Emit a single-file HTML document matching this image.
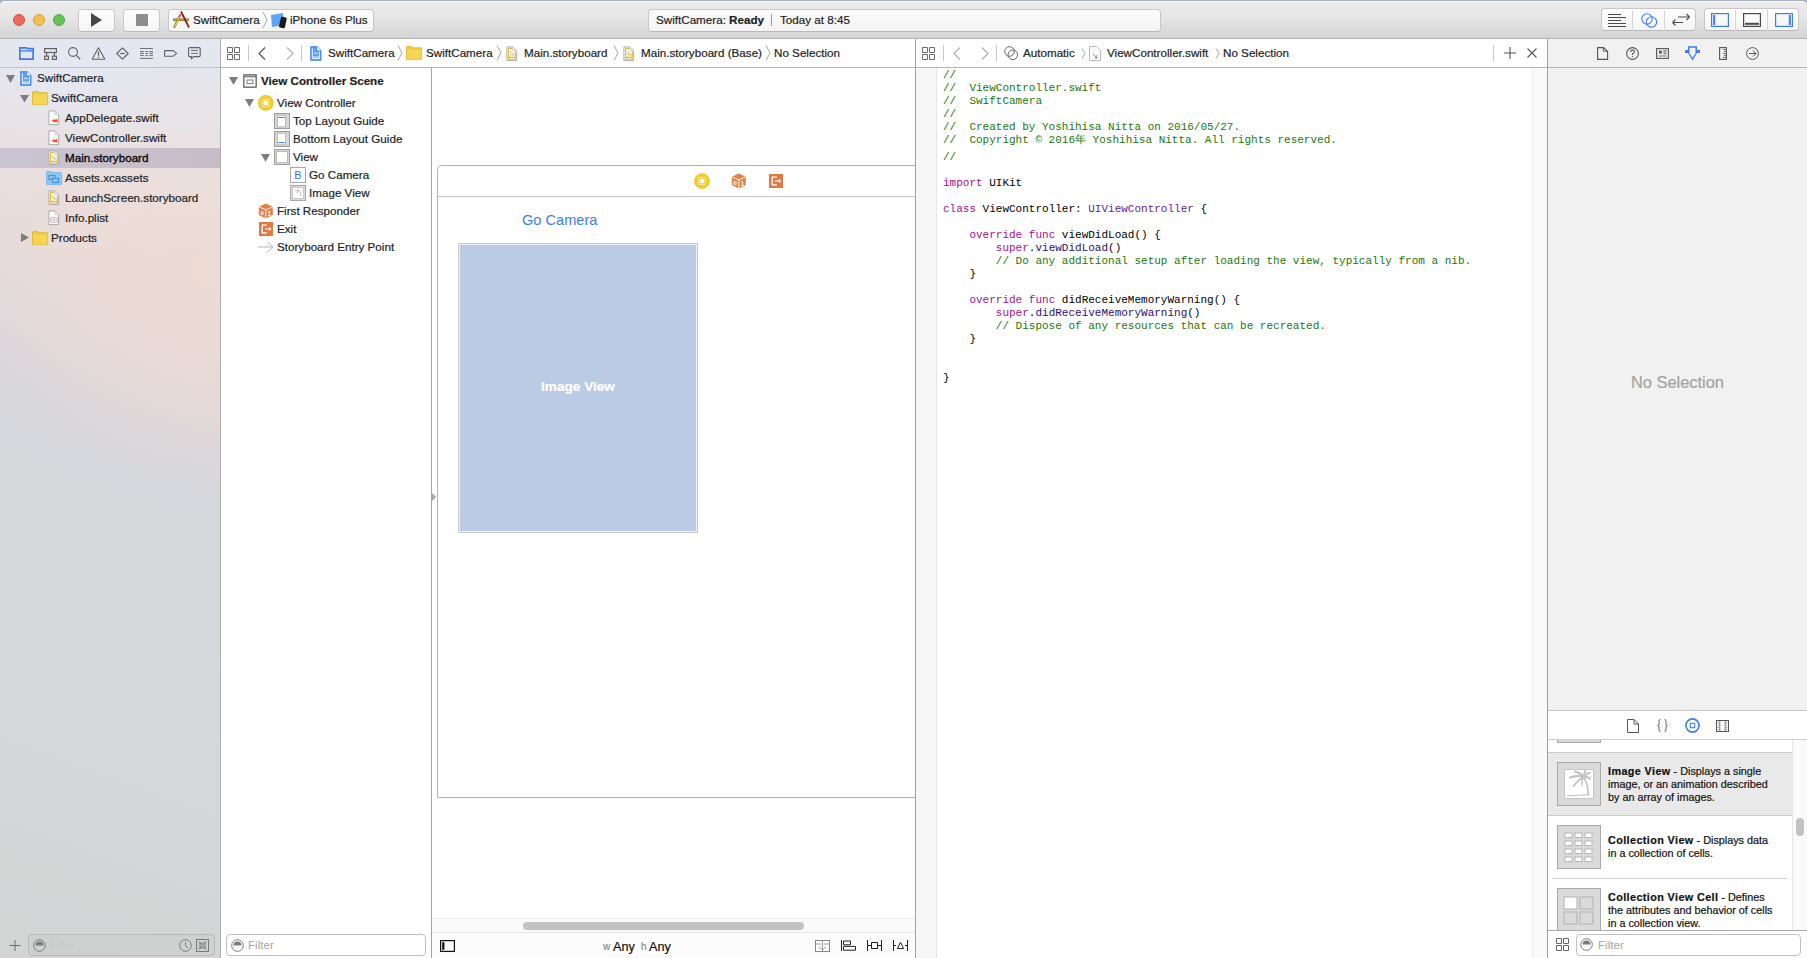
<!DOCTYPE html>
<html><head><meta charset="utf-8">
<style>
*{margin:0;padding:0;box-sizing:border-box}
html,body{width:1807px;height:958px;overflow:hidden;background:#fff}
body{font-family:"Liberation Sans",sans-serif;font-size:11.65px;color:#1e1e1e;position:relative}
.a{position:absolute}
svg{position:absolute;overflow:visible}
.t{position:absolute;white-space:nowrap;line-height:14px;-webkit-text-stroke:0.2px currentColor}
#tb{left:0;top:1px;width:1807px;height:38px;border-radius:5px 5px 0 0;background:linear-gradient(#ececec,#e7e7e7 40%,#d4d4d4);border-bottom:1px solid #b3b3b3;box-shadow:inset 0 1px 0 #fafafa}
#topline{left:0;top:0;width:1807px;height:8px;background:#a9b2bf}
.btn{position:absolute;background:linear-gradient(#fefefe,#f4f4f4);border:1px solid #c8c8c8;border-bottom-color:#b9b9b9;border-radius:4px;top:9px;height:23px}
.light{position:absolute;top:14px;width:12px;height:12px;border-radius:50%}
#nav{left:0;top:39px;width:220px;height:919px;background:radial-gradient(ellipse 240px 220px at 215px 230px,rgba(240,218,208,0.7),rgba(240,218,208,0.4) 55%,rgba(240,218,208,0) 100%),linear-gradient(200deg,#e4e8f0 0px,#e5e7ef 100px,#e7e1e3 160px,#e7dddc 240px,#e1d9dc 320px,#d9d7dc 390px,#d6d7dc 450px,#d5d7d9 651px,#d3d4d4 945px)}
.hb{position:absolute;height:1px;background:#bcbcbc}
.vb{position:absolute;width:1px;background:#b0b0b0}
.code{position:absolute;left:943px;font-family:"Liberation Mono",monospace;font-size:11px;white-space:pre;line-height:13px;color:#000}
.c{color:#1a780c}.k{color:#aa0d91}.cl{color:#5c2699}.m{color:#2e0d6e}
.field{position:absolute;border:1px solid #b8b8b8;border-radius:4px;height:22px;top:934px}
.lt b{letter-spacing:0.4px}
.ph{position:absolute;color:#a6a6a6;white-space:nowrap;line-height:14px}
</style></head><body>
<!-- ============ TOOLBAR ============ -->
<div id="topline" class="a"></div>
<div id="tb" class="a"></div>
<div class="light" style="left:13px;background:#ed6a5e;border:0.5px solid #d5503f"></div>
<div class="light" style="left:33px;background:#f5bf4f;border:0.5px solid #d6a13c"></div>
<div class="light" style="left:53px;background:#62c554;border:0.5px solid #52a843"></div>
<div class="btn" style="left:78px;width:37px"></div>
<svg style="left:91px;top:13px" width="12" height="14"><path d="M0 0 L11 7 L0 14Z" fill="#474747"/></svg>
<div class="btn" style="left:123px;width:37px"></div>
<div class="a" style="left:136px;top:14px;width:12px;height:12px;background:#8d8d8d"></div>
<div class="btn" style="left:168px;width:206px"></div>
<!-- xcode icon -->
<svg style="left:172px;top:11px" width="18" height="18"><path d="M1 8.8H17" stroke="#8a6a3a" stroke-width="2.6"/><path d="M1.3 8.8H16.7" stroke="#c9a66a" stroke-width="1.2"/><path d="M9 0.5L17 16.5" stroke="#8e1c12" stroke-width="1.7"/><path d="M2 16.8L7.6 5.2" stroke="#6b5a20" stroke-width="2.1"/><path d="M2.2 16.4L7.6 5.4" stroke="#f3dd3a" stroke-width="1.2"/><path d="M7.4 5.6L8.6 3.2" stroke="#e05050" stroke-width="2"/></svg>
<div class="t" style="left:193px;top:13px">SwiftCamera</div>
<svg style="left:262px;top:12px" width="6" height="16"><path d="M1 0 L5 8 L1 16" stroke="#a8a8a8" fill="none"/></svg>
<svg style="left:270px;top:13px" width="18" height="15">
<path d="M1 2 L13 0 L14 12 L2 14Z" fill="#5ea5f5"/>
<rect x="10" y="4" width="6" height="11" rx="1.2" fill="#1a1a1a" transform="rotate(12 13 9)"/>
</svg>
<div class="t" style="left:290px;top:13px">iPhone 6s Plus</div>
<!-- activity view -->
<div class="btn" style="left:648px;width:513px;background:linear-gradient(#fbfbfb,#f4f4f4)"></div>
<div class="t" style="left:656px;top:13px">SwiftCamera: <b>Ready</b></div>
<div class="a" style="left:771px;top:14px;width:1px;height:12px;background:#9a9a9a"></div>
<div class="t" style="left:780px;top:13px">Today at 8:45</div>
<!-- right segmented -->
<div class="btn" style="left:1601px;width:95px;top:8px"></div>
<div class="a" style="left:1632px;top:10px;width:1px;height:21px;background:#d6d6d6"></div>
<div class="a" style="left:1664px;top:10px;width:1px;height:21px;background:#d6d6d6"></div>
<svg style="left:1608px;top:14px" width="18" height="13"><path d="M0 0.5H13M0 3.5H18M0 6.5H13M0 9.5H18M0 12.5H18" stroke="#4a4a4a" stroke-width="1"/></svg>
<svg style="left:1641px;top:13px" width="17" height="14"><circle cx="6" cy="6" r="5.2" stroke="#3f7cf0" fill="none" stroke-width="1.1"/><circle cx="10.5" cy="9" r="5.2" stroke="#3f7cf0" fill="none" stroke-width="1.1"/></svg>
<svg style="left:1672px;top:14px" width="18" height="12"><path d="M0.5 8.5H11M0.5 8.5L3.5 5.5M0.5 8.5L3.5 11.5M6 3H17.5M17.5 3L14.5 0M17.5 3L14.5 6" stroke="#4a4a4a" fill="none" stroke-width="1.1"/></svg>
<div class="btn" style="left:1704px;width:95px;top:8px"></div>
<div class="a" style="left:1735px;top:10px;width:1px;height:21px;background:#d6d6d6"></div>
<div class="a" style="left:1767px;top:10px;width:1px;height:21px;background:#d6d6d6"></div>
<svg style="left:1711px;top:13px" width="18" height="14"><rect x="0.6" y="0.6" width="16.8" height="12.8" stroke="#3f7cf0" fill="none" stroke-width="1.2"/><rect x="2.2" y="2" width="2" height="10" fill="#3f7cf0"/></svg>
<svg style="left:1743px;top:13px" width="18" height="14"><rect x="0.6" y="0.6" width="16.8" height="12.8" stroke="#4a4a4a" fill="none" stroke-width="1.2"/><rect x="2" y="9.8" width="14" height="2" fill="#4a4a4a"/></svg>
<svg style="left:1775px;top:13px" width="18" height="14"><rect x="0.6" y="0.6" width="16.8" height="12.8" stroke="#3f7cf0" fill="none" stroke-width="1.2"/><rect x="13.8" y="2" width="2" height="10" fill="#3f7cf0"/></svg>

<!-- ============ NAVIGATOR ============ -->
<div id="nav" class="a"></div>
<div class="hb" style="left:0;top:67px;width:220px;background:#c3c3c6"></div>
<svg style="left:19px;top:47px" width="15" height="13"><path d="M0.85 0.85H7.6L8.4 1.7H14.15V12.15H0.85Z" fill="none" stroke="#3b7cf3" stroke-width="1.7"/><path d="M1.7 3.9H13.3" stroke="#3b7cf3" stroke-width="1.3"/></svg>
<svg style="left:44px;top:48px" width="13" height="12"><g fill="none" stroke="#626262" stroke-width="1.2"><rect x="0.6" y="0.6" width="11.8" height="3.9"/><path d="M2.6 4.5V8M10.4 4.5V8"/><rect x="0.6" y="8.2" width="3.9" height="3.2"/><rect x="8.5" y="8.2" width="3.9" height="3.2"/></g></svg>
<svg style="left:68px;top:47px" width="13" height="13"><circle cx="5" cy="5" r="4.4" fill="none" stroke="#626262" stroke-width="1.1"/><path d="M8.1 8.1L12.2 12.2" stroke="#626262" stroke-width="1.3"/></svg>
<svg style="left:92px;top:47px" width="14" height="13"><path d="M6.5 0.8L12.6 11.8Q12.8 12.3 12.2 12.3H0.8Q0.2 12.3 0.4 11.8Z" fill="none" stroke="#626262" stroke-width="1.1" stroke-linejoin="round"/><path d="M6.5 4.2V8.8M6.5 9.8V11" stroke="#626262" stroke-width="1.2"/></svg>
<svg style="left:116px;top:47px" width="13" height="13"><path d="M6.5 0.8L12.2 6.5L6.5 12.2L0.8 6.5Z" fill="none" stroke="#626262" stroke-width="1.1" stroke-linejoin="round"/><path d="M4.2 6.5H8.8" stroke="#626262" stroke-width="1.1"/></svg>
<svg style="left:140px;top:48px" width="13" height="11"><path d="M0 0.5H13M0 3.5H3.8M5.4 3.5H7.9M9.3 3.5H13M0 5.4H3.8M5.4 5.4H7.9M9.3 5.4H13M0 7.4H3.8M5.4 7.4H7.9M9.3 7.4H13M0 10.4H13" stroke="#626262" stroke-width="0.9"/></svg>
<svg style="left:164px;top:50px" width="14" height="7"><path d="M0.6 0.6H9.3L12.6 3.4L9.3 6.2H0.6Z" fill="none" stroke="#626262" stroke-width="1.1" stroke-linejoin="round"/></svg>
<svg style="left:188px;top:47px" width="13" height="12"><path d="M1.6 0.6H11.2Q12.2 0.6 12.2 1.6V8.6Q12.2 9.6 11.2 9.6H5.6L3.5 11.6V9.6H1.6Q0.6 9.6 0.6 8.6V1.6Q0.6 0.6 1.6 0.6Z" fill="none" stroke="#626262" stroke-width="1.1"/><path d="M3 3.4H10M3 6.4H10" stroke="#626262" stroke-width="0.9"/></svg>

<!-- tree -->
<div class="a" style="left:0;top:148px;width:220px;height:20px;background:linear-gradient(90deg,#c8c5d1,#c6bcc6)"></div>
<svg style="left:6px;top:75px" width="9" height="8"><path d="M0 0H9L4.5 8Z" fill="#7d7d7d"/></svg>
<svg style="left:20px;top:71px" width="12" height="15"><path d="M0.7 0.7H7.4L11 4.3V14.3H0.7Z" fill="#5b9cf6" stroke="#3f7fe4" stroke-width="0.9"/><path d="M7.4 0.7V4.3H11Z" fill="#fff"/><path d="M2.3 2.2V12.6H9.4V5.5M2.3 11H9.4" fill="none" stroke="#fff" stroke-width="0.9"/><path d="M4.2 8.2Q5.85 5.8 7.5 8.2" fill="none" stroke="#d8e8ff" stroke-width="1.2"/></svg>
<div class="t" style="left:37px;top:71px">SwiftCamera</div>
<svg style="left:20px;top:95px" width="9" height="8"><path d="M0 0H9L4.5 7.5Z" fill="#7d7d7d"/></svg>
<svg style="left:32px;top:91px" width="16" height="14"><path d="M0.5 1Q0.5 0.4 1.1 0.4H5.6Q6.2 0.4 6.5 1L6.9 1.8H15Q15.6 1.8 15.6 2.4V13Q15.6 13.6 15 13.6H1.1Q0.5 13.6 0.5 13Z" fill="#eccb3c" stroke="#d9b526" stroke-width="0.8"/><path d="M0.9 3.2H15.2V12.9Q15.2 13.2 14.9 13.2H1.2Q0.9 13.2 0.9 12.9Z" fill="#f4d654"/></svg>
<div class="t" style="left:51px;top:91px">SwiftCamera</div>
<!-- files -->
<svg style="left:48px;top:110px" width="12" height="16"><path d="M0.9 0.9H6.8L10.6 4.7V14.6H0.9Z" fill="#fff" stroke="#a4a4a4" stroke-width="0.9"/><path d="M6.8 0.9V4.7H10.6Z" fill="#ececec" stroke="#c4c4c4" stroke-width="0.7"/><path d="M2.8 10Q5.6 12.9 8.6 12.2Q9.4 12.2 9.7 12.7Q10 10.3 8.3 7.6Q8.8 9.2 8.1 10.1Q6 9 4.2 7.2Q5.5 9 6.4 10Q4.8 10.6 2.8 10Z" fill="#e84e2c"/></svg>
<div class="t" style="left:65px;top:111px">AppDelegate.swift</div>
<svg style="left:48px;top:130px" width="12" height="16"><path d="M0.9 0.9H6.8L10.6 4.7V14.6H0.9Z" fill="#fff" stroke="#a4a4a4" stroke-width="0.9"/><path d="M6.8 0.9V4.7H10.6Z" fill="#ececec" stroke="#c4c4c4" stroke-width="0.7"/><path d="M2.8 10Q5.6 12.9 8.6 12.2Q9.4 12.2 9.7 12.7Q10 10.3 8.3 7.6Q8.8 9.2 8.1 10.1Q6 9 4.2 7.2Q5.5 9 6.4 10Q4.8 10.6 2.8 10Z" fill="#e84e2c"/></svg>
<div class="t" style="left:65px;top:131px">ViewController.swift</div>
<svg style="left:48px;top:150px" width="12" height="16"><path d="M0.9 0.9H6.8L10.6 4.7V14.6H0.9Z" fill="#fff" stroke="#a4a4a4" stroke-width="0.9"/><path d="M2.6 2.4H6.4M2.6 2.4V13.2H9.2V5.5M2.6 11.4H9.2" fill="none" stroke="#e0b92c" stroke-width="1.1"/><path d="M6.8 0.9V4.7H10.6Z" fill="#ececec" stroke="#c4c4c4" stroke-width="0.7"/><path d="M4.2 6.2Q5.2 5.4 6.2 6.8Q7.4 8.4 8 9.6M4.6 7.4Q5.8 9.6 7.2 9.2" fill="none" stroke="#e0b92c" stroke-width="0.9"/></svg>
<div class="t" style="left:65px;top:151px;color:#0a0a0a;-webkit-text-stroke:0.35px #0a0a0a">Main.storyboard</div>
<svg style="left:46px;top:171px" width="16" height="14"><path d="M0.5 1Q0.5 0.4 1.1 0.4H5.6L6.6 1.6H15Q15.6 1.6 15.6 2.2V13Q15.6 13.6 15 13.6H1.1Q0.5 13.6 0.5 13Z" fill="#8ec6f3" stroke="#74b3ec" stroke-width="0.8"/><rect x="3" y="4.6" width="6" height="4" fill="none" stroke="#3f8ee0" stroke-width="1"/><rect x="6.5" y="7.4" width="6" height="4" fill="#8ec6f3" stroke="#3f8ee0" stroke-width="1"/></svg>
<div class="t" style="left:65px;top:171px">Assets.xcassets</div>
<svg style="left:48px;top:190px" width="12" height="16"><path d="M0.9 0.9H6.8L10.6 4.7V14.6H0.9Z" fill="#fff" stroke="#a4a4a4" stroke-width="0.9"/><path d="M2.6 2.4H6.4M2.6 2.4V13.2H9.2V5.5M2.6 11.4H9.2" fill="none" stroke="#e0b92c" stroke-width="1.1"/><path d="M6.8 0.9V4.7H10.6Z" fill="#ececec" stroke="#c4c4c4" stroke-width="0.7"/><path d="M4.2 6.2Q5.2 5.4 6.2 6.8Q7.4 8.4 8 9.6M4.6 7.4Q5.8 9.6 7.2 9.2" fill="none" stroke="#e0b92c" stroke-width="0.9"/></svg>
<div class="t" style="left:65px;top:191px">LaunchScreen.storyboard</div>
<svg style="left:48px;top:210px" width="12" height="16"><path d="M0.9 0.9H6.8L10.6 4.7V14.6H0.9Z" fill="#fff" stroke="#a4a4a4" stroke-width="0.9"/><path d="M6.8 0.9V4.7H10.6Z" fill="#ececec" stroke="#c4c4c4" stroke-width="0.7"/><path d="M2.6 7.3H9.3V12.3H2.6ZM2.6 9.8H9.3M5.9 7.3V12.3" fill="none" stroke="#b4b4b4" stroke-width="0.8"/></svg>
<div class="t" style="left:65px;top:211px">Info.plist</div>
<svg style="left:21px;top:233px" width="8" height="9"><path d="M0 0V9L8 4.5Z" fill="#7d7d7d"/></svg>
<svg style="left:32px;top:231px" width="16" height="14"><path d="M0.5 1Q0.5 0.4 1.1 0.4H5.6Q6.2 0.4 6.5 1L6.9 1.8H15Q15.6 1.8 15.6 2.4V13Q15.6 13.6 15 13.6H1.1Q0.5 13.6 0.5 13Z" fill="#eccb3c" stroke="#d9b526" stroke-width="0.8"/><path d="M0.9 3.2H15.2V12.9Q15.2 13.2 14.9 13.2H1.2Q0.9 13.2 0.9 12.9Z" fill="#f4d654"/></svg>
<div class="t" style="left:51px;top:231px">Products</div>
<!-- nav bottom -->
<svg style="left:9px;top:940px" width="12" height="12"><path d="M6 0V11M0.5 5.5H11.5" stroke="#6d6d6d" stroke-width="1"/></svg>
<div class="field" style="left:28px;width:187px;background:rgba(200,200,200,0.35);border-color:#b9b9b9"></div>
<svg style="left:33px;top:939px" width="13" height="13"><circle cx="6.5" cy="6.5" r="5.8" fill="none" stroke="#7a7a7a" stroke-width="1"/><path d="M2.5 6.5A4 4 0 0 1 10.5 6.5Z" fill="#7a7a7a"/></svg>
<div class="ph" style="left:50px;top:938px;color:#c9c9c9">Filter</div>
<svg style="left:179px;top:939px" width="13" height="13"><circle cx="6.5" cy="6.5" r="5.8" fill="none" stroke="#7a7a7a" stroke-width="1"/><path d="M6.5 3V6.5L9 9" stroke="#7a7a7a" fill="none"/></svg>
<svg style="left:196px;top:939px" width="13" height="13"><rect x="0.5" y="0.5" width="12" height="12" fill="none" stroke="#7a7a7a"/><path d="M2.5 2.5L10.5 10.5M10.5 2.5L2.5 10.5" stroke="#7a7a7a"/><rect x="4" y="4" width="5" height="5" fill="none" stroke="#7a7a7a"/></svg>
<div class="vb" style="left:220px;top:39px;height:919px;background:#adadad"></div>

<!-- ============ BREADCRUMB (storyboard editor) ============ -->
<div class="hb" style="left:221px;top:67px;width:1326px;background:#b5b5b5"></div>
<svg style="left:227px;top:47px" width="14" height="14"><path d="M0.5 0.5H5.5V5.5H0.5ZM7.5 0.5H12.5V5.5H7.5ZM0.5 7.5H5.5V12.5H0.5ZM7.5 7.5H12.5V12.5H7.5Z" fill="none" stroke="#6b6b6b"/></svg>
<div class="a" style="left:248px;top:45px;width:1px;height:16px;background:#c8c8c8"></div>
<svg style="left:258px;top:47px" width="8" height="13"><path d="M7 0.5L1 6.5L7 12.5" stroke="#555" fill="none" stroke-width="1.2"/></svg>
<svg style="left:286px;top:47px" width="8" height="13"><path d="M1 0.5L7 6.5L1 12.5" stroke="#b0b0b0" fill="none" stroke-width="1.2"/></svg>
<div class="a" style="left:301px;top:45px;width:1px;height:16px;background:#c8c8c8"></div>
<svg style="left:310px;top:46px" width="12" height="15"><path d="M0.7 0.7H7.4L11 4.3V14.3H0.7Z" fill="#5b9cf6" stroke="#3f7fe4" stroke-width="0.9"/><path d="M7.4 0.7V4.3H11Z" fill="#fff"/><path d="M2.3 2.2V12.6H9.4V5.5M2.3 11H9.4" fill="none" stroke="#fff" stroke-width="0.9"/><path d="M4.2 8.2Q5.85 5.8 7.5 8.2" fill="none" stroke="#d8e8ff" stroke-width="1.2"/></svg>
<div class="t" style="left:328px;top:46px">SwiftCamera</div>
<svg style="left:397px;top:45px" width="6" height="16"><path d="M1 0.5L5 8L1 15.5" stroke="#a8a8a8" fill="none"/></svg>
<svg style="left:406px;top:46px" width="16" height="14"><path d="M0.5 1Q0.5 0.4 1.1 0.4H5.6Q6.2 0.4 6.5 1L6.9 1.8H15Q15.6 1.8 15.6 2.4V13Q15.6 13.6 15 13.6H1.1Q0.5 13.6 0.5 13Z" fill="#eccb3c" stroke="#d9b526" stroke-width="0.8"/><path d="M0.9 3.2H15.2V12.9Q15.2 13.2 14.9 13.2H1.2Q0.9 13.2 0.9 12.9Z" fill="#f4d654"/></svg>
<div class="t" style="left:426px;top:46px">SwiftCamera</div>
<svg style="left:496px;top:45px" width="6" height="16"><path d="M1 0.5L5 8L1 15.5" stroke="#a8a8a8" fill="none"/></svg>
<svg style="left:506px;top:46px" width="12" height="16"><path d="M0.9 0.9H6.8L10.6 4.7V14.6H0.9Z" fill="#fff" stroke="#a4a4a4" stroke-width="0.9"/><path d="M2.6 2.4H6.4M2.6 2.4V13.2H9.2V5.5M2.6 11.4H9.2" fill="none" stroke="#e0b92c" stroke-width="1.1"/><path d="M6.8 0.9V4.7H10.6Z" fill="#ececec" stroke="#c4c4c4" stroke-width="0.7"/><path d="M4.2 6.2Q5.2 5.4 6.2 6.8Q7.4 8.4 8 9.6M4.6 7.4Q5.8 9.6 7.2 9.2" fill="none" stroke="#e0b92c" stroke-width="0.9"/></svg>
<div class="t" style="left:524px;top:46px">Main.storyboard</div>
<svg style="left:613px;top:45px" width="6" height="16"><path d="M1 0.5L5 8L1 15.5" stroke="#a8a8a8" fill="none"/></svg>
<svg style="left:623px;top:46px" width="12" height="16"><path d="M0.9 0.9H6.8L10.6 4.7V14.6H0.9Z" fill="#fff" stroke="#a4a4a4" stroke-width="0.9"/><path d="M2.6 2.4H6.4M2.6 2.4V13.2H9.2V5.5M2.6 11.4H9.2" fill="none" stroke="#e0b92c" stroke-width="1.1"/><path d="M6.8 0.9V4.7H10.6Z" fill="#ececec" stroke="#c4c4c4" stroke-width="0.7"/><path d="M4.2 6.2Q5.2 5.4 6.2 6.8Q7.4 8.4 8 9.6M4.6 7.4Q5.8 9.6 7.2 9.2" fill="none" stroke="#e0b92c" stroke-width="0.9"/></svg>
<div class="t" style="left:641px;top:46px">Main.storyboard (Base)</div>
<svg style="left:765px;top:45px" width="6" height="16"><path d="M1 0.5L5 8L1 15.5" stroke="#a8a8a8" fill="none"/></svg>
<div class="t" style="left:774px;top:46px">No Selection</div>

<!-- ============ OUTLINE ============ -->
<svg style="left:229px;top:77px" width="9" height="8"><path d="M0 0H9L4.5 8Z" fill="#7d7d7d"/></svg>
<svg style="left:243px;top:74px" width="14" height="14"><rect x="0" y="0" width="14" height="14" rx="1" fill="#7d7d7d"/><path d="M1.5 2L3 1.2L4.5 2L6 1.2L7.5 2L9 1.2L10.5 2L12 1.2" stroke="#cfcfcf" stroke-width="0.6" fill="none"/><rect x="1.6" y="3.4" width="10.8" height="9" fill="#fff"/><rect x="4" y="6" width="6" height="3.6" fill="none" stroke="#7d7d7d" stroke-width="1"/></svg>
<div class="t" style="left:261px;top:74px;font-weight:bold">View Controller Scene</div>
<svg style="left:245px;top:99px" width="9" height="8"><path d="M0 0H9L4.5 8Z" fill="#7d7d7d"/></svg>
<svg style="left:258px;top:95px" width="16" height="16"><circle cx="7.8" cy="7.8" r="7.6" fill="#f0cc2c" stroke="#e3b91b" stroke-width="0.5"/><rect x="4.2" y="4.2" width="7.2" height="7.2" fill="none" stroke="#f9e68c" stroke-width="1.1"/><rect x="5.6" y="5.6" width="4.4" height="4.4" fill="#fff"/></svg>
<div class="t" style="left:277px;top:96px">View Controller</div>
<svg style="left:274px;top:113px" width="16" height="16"><rect x="0.5" y="0.5" width="15" height="15" fill="#d6d6d6" stroke="#9c9c9c"/><rect x="3.5" y="2.2" width="8" height="11.6" fill="#fff" stroke="#a8a8a8" stroke-width="0.7"/><path d="M4.2 4.4H10.8" stroke="#2f63d6" stroke-width="0.9"/></svg>
<div class="t" style="left:293px;top:114px">Top Layout Guide</div>
<svg style="left:274px;top:131px" width="16" height="16"><rect x="0.5" y="0.5" width="15" height="15" fill="#d6d6d6" stroke="#9c9c9c"/><rect x="3.5" y="2.2" width="8" height="11.6" fill="#fff" stroke="#a8a8a8" stroke-width="0.7"/><path d="M4.2 11.6H10.8" stroke="#2f63d6" stroke-width="0.9"/></svg>
<div class="t" style="left:293px;top:132px">Bottom Layout Guide</div>
<svg style="left:261px;top:154px" width="9" height="8"><path d="M0 0H9L4.5 8Z" fill="#7d7d7d"/></svg>
<svg style="left:274px;top:149px" width="16" height="16"><rect x="0.5" y="0.5" width="15" height="15" fill="#d6d6d6" stroke="#9c9c9c"/><rect x="2.6" y="2.6" width="10.8" height="10.8" fill="#fff" stroke="#a8a8a8" stroke-width="0.7"/></svg>
<div class="t" style="left:293px;top:150px">View</div>
<svg style="left:290px;top:167px" width="16" height="16"><rect x="0.5" y="0.5" width="15" height="15" fill="#fff" stroke="#a8a8a8"/><text x="8" y="12.3" text-anchor="middle" font-family="Liberation Sans" font-size="11" fill="#3d6fe0">B</text></svg>
<div class="t" style="left:309px;top:168px">Go Camera</div>
<svg style="left:290px;top:185px" width="16" height="16"><rect x="0.5" y="0.5" width="15" height="15" fill="#dcdcdc" stroke="#a8a8a8"/><rect x="2.5" y="2.5" width="11" height="11" fill="#fff" stroke="#b8b8b8" stroke-width="0.7"/><path d="M5 5L9 6M9 4L7 8M10 6L11 11" stroke="#aaa" stroke-width="0.8" fill="none"/></svg>
<div class="t" style="left:309px;top:186px">Image View</div>
<svg style="left:258px;top:203px" width="16" height="16"><path d="M0.8 3.8L7.8 0.6L14.8 3.8V12L7.8 15.4L0.8 12Z" fill="#e2804a"/><path d="M0.8 3.8L7.8 6.8L14.8 3.8M7.8 6.8V15.4" stroke="#fff" stroke-width="0.9" fill="none"/><text x="11.4" y="12.6" text-anchor="middle" font-family="Liberation Sans" font-size="6.5" font-weight="bold" fill="#fff">1</text><text x="4.1" y="11.8" text-anchor="middle" font-family="Liberation Sans" font-size="6" font-weight="bold" fill="#fff">0</text></svg>
<div class="t" style="left:277px;top:204px">First Responder</div>
<svg style="left:259px;top:222px" width="14" height="14"><rect x="0" y="0" width="14" height="14" fill="#e07a44"/><path d="M7.8 3.1H3.2V10.9H7.8" stroke="#fff" stroke-width="1.3" fill="none"/><path d="M5.8 7H11.6M10 5.4L11.6 7L10 8.6" stroke="#fff" stroke-width="1.1" fill="none"/></svg>
<div class="t" style="left:277px;top:222px">Exit</div>
<svg style="left:258px;top:241px" width="16" height="12"><path d="M0 6H14.6" stroke="#c4c4c4" stroke-width="1.3"/><path d="M10 1.2L14.8 6L10 10.8" stroke="#a6a6a6" stroke-width="0.9" fill="none"/></svg>
<div class="t" style="left:277px;top:240px">Storyboard Entry Point</div>
<!-- outline bottom -->
<div class="field" style="left:226px;width:200px;background:#fff;border-color:#c0c0c0"></div>
<svg style="left:231px;top:939px" width="13" height="13"><circle cx="6.5" cy="6.5" r="5.8" fill="none" stroke="#7a7a7a" stroke-width="1"/><path d="M2.5 6.5A4 4 0 0 1 10.5 6.5Z" fill="#7a7a7a"/></svg>
<div class="ph" style="left:248px;top:938px">Filter</div>
<div class="vb" style="left:431px;top:68px;height:890px;background:#a3a3a3"></div>

<!-- ============ CANVAS ============ -->
<div class="a" style="left:437px;top:165px;width:490px;height:633px;border:1px solid #b3b3b3;border-radius:5px 0 0 0"></div>
<div class="hb" style="left:438px;top:196px;width:477px;background:#c4c4c4"></div>
<svg style="left:694px;top:173px" width="16" height="16"><circle cx="8" cy="8" r="7.6" fill="#f0cc2c" stroke="#e3b91b" stroke-width="0.5"/><rect x="4.4" y="4.4" width="7.2" height="7.2" fill="none" stroke="#f9e68c" stroke-width="1.1"/><rect x="5.8" y="5.8" width="4.4" height="4.4" fill="#fff"/></svg>
<svg style="left:731px;top:173px" width="16" height="16"><path d="M0.8 3.8L7.8 0.6L14.8 3.8V12L7.8 15.4L0.8 12Z" fill="#e2804a"/><path d="M0.8 3.8L7.8 6.8L14.8 3.8M7.8 6.8V15.4" stroke="#fff" stroke-width="0.9" fill="none"/><text x="11.4" y="12.6" text-anchor="middle" font-family="Liberation Sans" font-size="6.5" font-weight="bold" fill="#fff">1</text><text x="4.1" y="11.8" text-anchor="middle" font-family="Liberation Sans" font-size="6" font-weight="bold" fill="#fff">0</text></svg>
<svg style="left:769px;top:174px" width="14" height="14"><rect x="0" y="0" width="14" height="14" fill="#e07a44"/><path d="M7.8 3.1H3.2V10.9H7.8" stroke="#fff" stroke-width="1.3" fill="none"/><path d="M5.8 7H11.6M10 5.4L11.6 7L10 8.6" stroke="#fff" stroke-width="1.1" fill="none"/></svg>
<div class="t" style="left:522px;top:211px;font-size:14.6px;color:#3d7cf0;line-height:18px;-webkit-text-stroke:0">Go Camera</div>
<div class="a" style="left:458px;top:243px;width:240px;height:290px;border:1px solid #c9c9c9;background:#bccbe4;box-shadow:inset 0 0 0 1px #eef2f8"></div>
<div class="t" style="left:458px;top:380px;width:240px;text-align:center;font-weight:bold;font-size:13.6px;color:#fff">Image View</div>
<svg style="left:432px;top:493px" width="5" height="8"><path d="M0 0L4.2 4L0 8Z" fill="#a8a8a8"/></svg>
<!-- scrollbar -->
<div class="a" style="left:432px;top:918px;width:483px;height:14px;background:#fafafa;border-top:1px solid #ececec"></div>
<div class="a" style="left:523px;top:922px;width:281px;height:8px;border-radius:4px;background:#c2c2c2"></div>
<div class="a" style="left:432px;top:932px;width:483px;height:26px;background:#fcfcfc;border-top:1px solid #e6e6e6"></div>
<svg style="left:440px;top:940px" width="15" height="12"><rect x="0.6" y="0.6" width="13.8" height="10.8" fill="none" stroke="#111" stroke-width="1.2"/><rect x="2.2" y="2.2" width="2.2" height="7.6" fill="#111"/></svg>
<div class="t" style="left:603px;top:940px;font-size:10px;color:#8a8a8a">w</div>
<div class="t" style="left:613px;top:939.5px;font-size:12.6px;color:#111">Any</div>
<div class="t" style="left:641px;top:940px;font-size:10px;color:#8a8a8a">h</div>
<div class="t" style="left:649px;top:939.5px;font-size:12.6px;color:#111">Any</div>
<svg style="left:815px;top:940px" width="15" height="12"><rect x="0.5" y="0.5" width="14" height="11" fill="none" stroke="#888"/><path d="M7.5 0V11M0 4H6M9 4H15M4 7L7.5 10L11 7" stroke="#888" fill="none" stroke-width="0.8"/></svg>
<svg style="left:841px;top:940px" width="15" height="11"><path d="M0.5 0V11M2.5 1H9.5V4.8H2.5ZM2.5 6.4H14.5V10.2H2.5Z" stroke="#222" fill="none" stroke-width="1"/></svg>
<svg style="left:867px;top:940px" width="15" height="11"><path d="M0.5 0V11M14.5 0V11M0.5 5.5H4M11 5.5H14.5M4.5 2.5H10.5V8.5H4.5Z" stroke="#222" fill="none" stroke-width="1"/></svg>
<svg style="left:893px;top:940px" width="15" height="11"><path d="M0.5 0V11M14.5 0V11M0.5 5.5H3M12 5.5H14.5M7.5 2.3L10.6 8.5H4.4Z" stroke="#222" fill="none" stroke-width="1"/></svg>

<!-- ============ EDITOR ============ -->
<div class="vb" style="left:915px;top:39px;height:919px;background:#a0a0a0"></div>
<svg style="left:922px;top:47px" width="14" height="14"><path d="M0.5 0.5H5.5V5.5H0.5ZM7.5 0.5H12.5V5.5H7.5ZM0.5 7.5H5.5V12.5H0.5ZM7.5 7.5H12.5V12.5H7.5Z" fill="none" stroke="#6b6b6b"/></svg>
<div class="a" style="left:943px;top:45px;width:1px;height:16px;background:#c8c8c8"></div>
<svg style="left:953px;top:47px" width="8" height="13"><path d="M7 0.5L1 6.5L7 12.5" stroke="#b0b0b0" fill="none" stroke-width="1.2"/></svg>
<svg style="left:981px;top:47px" width="8" height="13"><path d="M1 0.5L7 6.5L1 12.5" stroke="#b0b0b0" fill="none" stroke-width="1.2"/></svg>
<div class="a" style="left:996px;top:45px;width:1px;height:16px;background:#c8c8c8"></div>
<svg style="left:1004px;top:46px" width="15" height="15"><circle cx="5.5" cy="5.5" r="4.8" fill="none" stroke="#666" stroke-width="1"/><circle cx="8.8" cy="8.8" r="4.8" fill="none" stroke="#666" stroke-width="1"/></svg>
<div class="t" style="left:1023px;top:46px">Automatic</div>
<svg style="left:1081px;top:48px" width="5" height="11"><path d="M1 0.5L4 5.5L1 10.5" stroke="#a8a8a8" fill="none"/></svg>
<svg style="left:1089px;top:46px" width="12" height="15"><path d="M0.5 0.5H7.5L11.5 4.5V14.5H0.5Z" fill="#fff" stroke="#b8b8b8"/><path d="M4 8L8 12M8 9V12H5" stroke="#888" fill="none" stroke-width="0.9"/></svg>
<div class="t" style="left:1107px;top:46px">ViewController.swift</div>
<svg style="left:1215px;top:48px" width="5" height="11"><path d="M1 0.5L4 5.5L1 10.5" stroke="#a8a8a8" fill="none"/></svg>
<div class="t" style="left:1223px;top:46px">No Selection</div>
<div class="a" style="left:1493px;top:45px;width:1px;height:16px;background:#c8c8c8"></div>
<svg style="left:1504px;top:47px" width="12" height="12"><path d="M6 0V12M0 6H12" stroke="#555" stroke-width="1.1"/></svg>
<svg style="left:1527px;top:48px" width="10" height="10"><path d="M0.5 0.5L9.5 9.5M9.5 0.5L0.5 9.5" stroke="#555" stroke-width="1.1"/></svg>
<!-- gutter -->
<div class="a" style="left:916px;top:68px;width:21px;height:890px;background:#f6f6f6;border-right:1px solid #e6e6e6"></div>
<div class="a" style="left:1532px;top:68px;width:15px;height:890px;background:#fafafa;border-left:1px solid #ececec"></div>
<!-- code -->
<div class="code" style="top:69px"><span class="c">//
//  ViewController.swift
//  SwiftCamera
//
//  Created by Yoshihisa Nitta on 2016/05/27.
//  Copyright © 2016年 Yoshihisa Nitta. All rights reserved.</span></div>
<div class="code" style="top:151px"><span class="c">//</span>

<span class="k">import</span> UIKit

<span class="k">class</span> ViewController: <span class="cl">UIViewController</span> {

    <span class="k">override</span> <span class="k">func</span> viewDidLoad() {
        <span class="k">super</span>.<span class="m">viewDidLoad</span>()
        <span class="c">// Do any additional setup after loading the view, typically from a nib.</span>
    }

    <span class="k">override</span> <span class="k">func</span> didReceiveMemoryWarning() {
        <span class="k">super</span>.<span class="m">didReceiveMemoryWarning</span>()
        <span class="c">// Dispose of any resources that can be recreated.</span>
    }


}</div>

<!-- ============ INSPECTOR ============ -->
<div class="a" style="left:1548px;top:39px;width:259px;height:919px;background:#f1f1f1"></div>
<div class="vb" style="left:1547px;top:39px;height:919px;background:#9e9e9e"></div>
<div class="hb" style="left:1548px;top:67px;width:259px;background:#b5b5b5"></div>
<svg style="left:1597px;top:47px" width="12" height="13"><path d="M0.6 0.6H6.6L10.6 4.6V12.4H0.6Z" fill="none" stroke="#555" stroke-width="1.1"/><path d="M6.3 0.6V4.2H10.4" fill="none" stroke="#555" stroke-width="0.9"/></svg>
<svg style="left:1626px;top:47px" width="13" height="13"><circle cx="6.5" cy="6.5" r="5.9" fill="none" stroke="#555" stroke-width="1.1"/><path d="M4.6 5Q4.6 3.1 6.5 3.1Q8.4 3.1 8.4 4.8Q8.4 5.9 6.5 6.8V7.9" stroke="#555" fill="none" stroke-width="1.1"/><circle cx="6.5" cy="9.6" r="0.7" fill="#555"/></svg>
<svg style="left:1656px;top:48px" width="13" height="11"><rect x="0.6" y="0.6" width="11.8" height="9.8" fill="none" stroke="#555" stroke-width="1.1"/><rect x="3" y="2.6" width="2.8" height="3" fill="#555"/><path d="M7.3 2.6H10.6M7.3 4.2H10.6M7.3 5.8H10.6M2.6 8H10.6" stroke="#555" stroke-width="0.8"/></svg>
<svg style="left:1685px;top:46px" width="16" height="15"><path d="M3 0.3H12V4H15V7H12L7.5 14.5L3 7H0V4H3Z" fill="#3f7cf0"/><path d="M4.5 1.8H10.5V7.2L7.5 11.8L4.5 7.2Z" fill="#f2f2f2"/></svg>
<svg style="left:1719px;top:47px" width="8" height="13"><rect x="0.6" y="0.6" width="6.8" height="11.8" fill="none" stroke="#555" stroke-width="1.1"/><path d="M4 2.6H7M5 4.6H7M4 6.6H7M5 8.6H7M4 10.4H7" stroke="#555" stroke-width="0.8"/></svg>
<svg style="left:1746px;top:47px" width="13" height="13"><circle cx="6.5" cy="6.5" r="5.9" fill="none" stroke="#555" stroke-width="1"/><path d="M3 6.5H10M7 3.5L10 6.5L7 9.5" stroke="#555" fill="none" stroke-width="1"/></svg>
<div class="t" style="left:1631px;top:373px;font-size:16.4px;line-height:18px;color:#a3a3a3">No Selection</div>
<!-- library -->
<div class="hb" style="left:1548px;top:710px;width:259px;background:#c6c6c6"></div>
<div class="a" style="left:1548px;top:711px;width:259px;height:28px;background:#fff"></div>
<div class="hb" style="left:1548px;top:739px;width:259px;background:#cdcdcd"></div>
<svg style="left:1627px;top:719px" width="12" height="14"><path d="M0.5 0.5H7L11.5 5V13.5H0.5Z M7 0.5V5H11.5" fill="none" stroke="#555" stroke-width="1"/></svg>
<svg style="left:1657px;top:719px" width="11" height="13"><path d="M3.5 0.5Q2 0.5 2 2V5Q2 6.3 0.6 6.5Q2 6.7 2 8V11Q2 12.5 3.5 12.5M7.5 0.5Q9 0.5 9 2V5Q9 6.3 10.4 6.5Q9 6.7 9 8V11Q9 12.5 7.5 12.5" fill="none" stroke="#555" stroke-width="0.9"/></svg>
<svg style="left:1685px;top:718px" width="15" height="15"><circle cx="7.5" cy="7.5" r="6.6" fill="none" stroke="#3f7cf0" stroke-width="1.6"/><rect x="5.3" y="5.3" width="4.4" height="4.4" fill="none" stroke="#3f7cf0" stroke-width="1.1"/></svg>
<svg style="left:1716px;top:720px" width="13" height="12"><rect x="0.5" y="0.5" width="12" height="11" fill="none" stroke="#555"/><path d="M2.3 2.2V3.2M2.3 4.6V5.6M2.3 7V8M2.3 9.2V10M10.7 2.2V3.2M10.7 4.6V5.6M10.7 7V8M10.7 9.2V10M3.8 0.5V11.5M9.2 0.5V11.5" stroke="#555" stroke-width="0.8"/></svg>
<div class="a" style="left:1548px;top:740px;width:244px;height:190px;background:#fff"></div>
<div class="a" style="left:1557px;top:740px;width:44px;height:3px;background:#dadada;border:1px solid #a9a9a9;border-top:0"></div>

<div class="hb" style="left:1548px;top:752px;width:244px;background:#cfcfcf"></div>
<div class="a" style="left:1548px;top:753px;width:244px;height:62px;background:#e9e9e9"></div>
<div class="hb" style="left:1548px;top:815px;width:244px;background:#cfcfcf"></div>
<div class="a" style="left:1557px;top:762px;width:44px;height:44px;background:#dadada;border:1px solid #a9a9a9"></div>
<div class="a" style="left:1564px;top:769px;width:30px;height:30px;background:#fff;border:1px solid #c6c6c6"></div>
<svg style="left:1565px;top:770px" width="28" height="28"><g stroke="#c2c2c2" stroke-linecap="round" fill="none"><path d="M18.5 6.5Q12 5 5 7.5" stroke-width="2.2"/><path d="M18.5 6.5Q15 2.5 10 1.5" stroke-width="2"/><path d="M18.5 6.5Q19 3 20.5 0.8" stroke-width="2"/><path d="M18.5 6.5Q22 3.5 25 2.5" stroke-width="2"/><path d="M18.5 6.5Q23 6.5 25 9" stroke-width="2"/><path d="M18.5 6.5Q12 11 8.5 16" stroke-width="2"/><path d="M18.5 6.5Q16.5 10 17 15" stroke-width="1.6"/><path d="M18.5 6.5Q23 14 23.5 25" stroke-width="1.6"/><path d="M2.5 25.8L24 24.6" stroke-width="1"/></g></svg>
<div class="t lt" style="left:1608px;top:764.5px;font-size:10.8px;line-height:13px;color:#111;white-space:normal;width:180px"><b>Image View</b> - Displays a single<br>image, or an animation described<br>by an array of images.</div>
<div class="a" style="left:1557px;top:825px;width:44px;height:44px;background:#dadada;border:1px solid #a9a9a9"></div>
<svg style="left:1564px;top:832px" width="30" height="30"><g fill="#fff" stroke="#b2b2b2" stroke-width="0.9"><rect x="1" y="1" width="7" height="4.5"/><rect x="11" y="1" width="7" height="4.5"/><rect x="21" y="1" width="7" height="4.5"/><rect x="1" y="9" width="7" height="4.5"/><rect x="11" y="9" width="7" height="4.5"/><rect x="21" y="9" width="7" height="4.5"/><rect x="1" y="17" width="7" height="4.5"/><rect x="11" y="17" width="7" height="4.5"/><rect x="21" y="17" width="7" height="4.5"/><rect x="1" y="25" width="7" height="4.5"/><rect x="11" y="25" width="7" height="4.5"/><rect x="21" y="25" width="7" height="4.5"/></g></svg>
<div class="t lt" style="left:1608px;top:833.5px;font-size:10.8px;line-height:13px;color:#111"><b>Collection View</b> - Displays data<br>in a collection of cells.</div>
<div class="hb" style="left:1552px;top:878px;width:235px;background:#cdcdcd"></div>
<div class="a" style="left:1557px;top:888px;width:44px;height:44px;background:#dadada;border:1px solid #a9a9a9"></div>
<svg style="left:1563px;top:895.5px" width="32" height="32"><rect x="1" y="1" width="13" height="12" fill="#fff" stroke="#b2b2b2"/><rect x="17" y="1" width="13" height="12" fill="#dadada" stroke="#b2b2b2"/><rect x="1" y="16" width="13" height="12" fill="#dadada" stroke="#b2b2b2"/><rect x="17" y="16" width="13" height="12" fill="#dadada" stroke="#b2b2b2"/></svg>
<div class="t lt" style="left:1608px;top:890.5px;font-size:10.8px;line-height:13px;color:#111"><b>Collection View Cell</b> - Defines<br>the attributes and behavior of cells<br>in a collection view.</div>
<div class="a" style="left:1792px;top:740px;width:15px;height:190px;background:#fafafa;border-left:1px solid #e6e6e6"></div>
<div class="a" style="left:1796px;top:818px;width:8px;height:18px;border-radius:4px;background:#c2c2c2"></div>
<!-- library bottom -->
<div class="a" style="left:1548px;top:930px;width:259px;height:28px;background:#fff;border-top:1px solid #aaaaaa"></div>
<svg style="left:1556px;top:938px" width="13" height="13"><path d="M0.5 0.5H5.5V5.5H0.5ZM7.5 0.5H12.5V5.5H7.5ZM0.5 7.5H5.5V12.5H0.5ZM7.5 7.5H12.5V12.5H7.5Z" fill="none" stroke="#666"/></svg>
<div class="field" style="left:1576px;width:225px;top:934px;height:22px;background:#fff;border-color:#c0c0c0"></div>
<svg style="left:1580px;top:938px" width="13" height="13"><circle cx="6.5" cy="6.5" r="5.8" fill="none" stroke="#7a7a7a" stroke-width="1"/><path d="M2.5 6.5A4 4 0 0 1 10.5 6.5Z" fill="#7a7a7a"/></svg>
<div class="ph" style="left:1598px;top:938px">Filter</div>
</body></html>
